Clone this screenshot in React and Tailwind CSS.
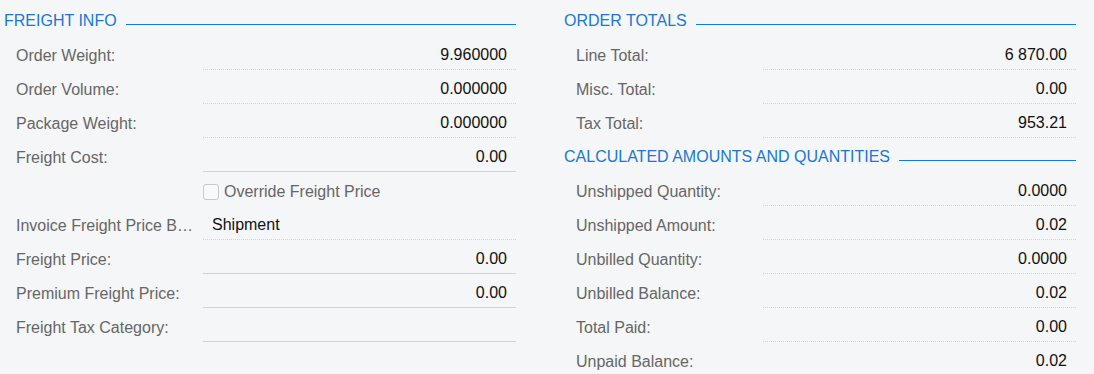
import React from "react";

const FREIGHT = [
  { label: "Order Weight:", value: "9.960000" },
  { label: "Order Volume:", value: "0.000000" },
  { label: "Package Weight:", value: "0.000000" },
  { label: "Freight Cost:", value: "0.00", solid: true },
  { check: "Override Freight Price" },
  { label: "Invoice Freight Price Basis:", value: "Shipment", left: true },
  { label: "Freight Price:", value: "0.00", solid: true },
  { label: "Premium Freight Price:", value: "0.00", solid: true },
  { label: "Freight Tax Category:", value: "", solid: true },
];

const TOTALS = [
  { label: "Line Total:", value: "6 870.00" },
  { label: "Misc. Total:", value: "0.00" },
  { label: "Tax Total:", value: "953.21" },
];

const CALC = [
  { label: "Unshipped Quantity:", value: "0.0000" },
  { label: "Unshipped Amount:", value: "0.02" },
  { label: "Unbilled Quantity:", value: "0.0000" },
  { label: "Unbilled Balance:", value: "0.02" },
  { label: "Total Paid:", value: "0.00" },
  { label: "Unpaid Balance:", value: "0.02" },
];

function Header({ title }) {
  return (
    <div className="flex h-[34px] items-start pt-[9px]">
      <span className="leading-5 text-[#1a78cf] whitespace-nowrap">{title}</span>
      <div className="ml-[9px] mt-[13px] h-px flex-1 bg-[#1a78cf]" />
    </div>
  );
}

function Row({ row }) {
  if (row.check) {
    return (
      <div className="flex h-[34px] items-center">
        <div className="w-[199px] shrink-0" />
        <div className="flex items-center pt-[6px]">
          <span className="h-4 w-4 rounded-[3px] border border-[#c8c8c8] bg-[#f9f9fa]" />
          <span className="ml-[5px] leading-5 text-[#666666]">{row.check}</span>
        </div>
      </div>
    );
  }
  return (
    <div className="flex h-[34px] items-end">
      <div className="w-[199px] shrink-0 truncate pb-[4px] pl-3 pr-[6px] leading-5 text-[#666666]">
        {row.label}
      </div>
      <div
        className={`flex h-full flex-1 items-end pb-[4px] leading-5 text-[#111111] ${
          row.left ? "justify-start pl-[9px]" : "justify-end pr-[9px]"
        } ${row.solid ? "border-b border-[#d2d2d2]" : "border-b border-dotted border-[#d4d4d4]"}`}
      >
        {row.value}
      </div>
    </div>
  );
}

export default function App() {
  return (
    <div className="min-h-[374px] bg-[#f5f6f8] pt-[2px] pl-1 text-[16px] font-['Liberation_Sans',Arial,sans-serif]">
      <div className="grid w-[1072px] grid-cols-2 gap-x-[48px]">
        <div>
          <Header title="FREIGHT INFO" />
          {FREIGHT.map((r, i) => (
            <Row key={i} row={r} />
          ))}
        </div>
        <div>
          <Header title="ORDER TOTALS" />
          {TOTALS.map((r, i) => (
            <Row key={i} row={r} />
          ))}
          <Header title="CALCULATED AMOUNTS AND QUANTITIES" />
          {CALC.map((r, i) => (
            <Row key={i} row={r} />
          ))}
        </div>
      </div>
    </div>
  );
}
